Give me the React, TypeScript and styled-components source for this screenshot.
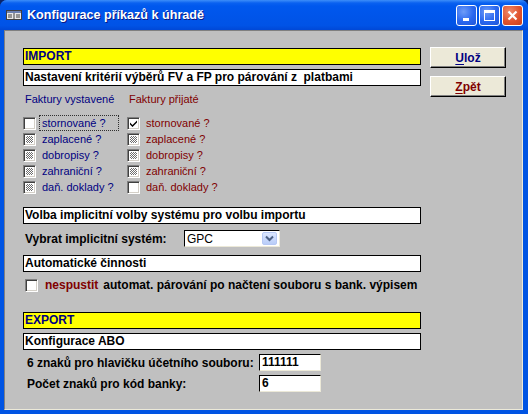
import React from "react";
import styled, { createGlobalStyle } from "styled-components";

const GlobalStyle = createGlobalStyle`
  html, body {
    margin: 0;
    padding: 0;
    background: #0a246a;
  }
  body {
    font-family: "Liberation Sans", Arial, sans-serif;
  }
`;

const BOLD = `bold 12px "Liberation Sans", Arial, sans-serif`;

const Window = styled.div`
  width: 528px;
  height: 414px;
  display: flex;
  flex-direction: column;
  box-sizing: border-box;
  border-radius: 7px 7px 0 0;
  overflow: hidden;
  background: #0054e3;
`;

const TitleBar = styled.div`
  height: 30px;
  flex: none;
  display: flex;
  align-items: center;
  padding: 0 5px 0 6px;
  box-sizing: border-box;
  background: linear-gradient(
    to bottom,
    #3d8ef9 0px,
    #0a61f0 3px,
    #0058ee 6px,
    #0055ea 50%,
    #0053e6 85%,
    #0048d6 100%
  );
`;

const TitleText = styled.span`
  margin-left: 5px;
  color: #fff;
  font: bold 12.6px "Liberation Sans", Arial, sans-serif;
  text-shadow: 1px 1px #0a1883;
  flex: 1;
`;

const CaptionButtons = styled.div`
  display: flex;
  gap: 2px;
  margin-top: 1px;
`;

const CaptionButton = styled.div<{ $close?: boolean }>`
  width: 21px;
  height: 21px;
  box-sizing: border-box;
  border: 1px solid #fff;
  border-radius: 3px;
  display: flex;
  align-items: center;
  justify-content: center;
  background: ${(p) =>
    p.$close
      ? "radial-gradient(circle at 35% 30%, #f08a6b 0%, #e0532e 55%, #c8401c 100%)"
      : "radial-gradient(circle at 35% 30%, #6e9cf8 0%, #2a67ef 55%, #1f56d8 100%)"};
`;

const Frame = styled.div`
  flex: 1;
  display: flex;
  border-left: 4px solid #0054e3;
  border-right: 5px solid #0054e3;
  border-bottom: 4px solid #0054e3;
`;

const Client = styled.div`
  flex: 1;
  display: flex;
  gap: 9px;
  align-items: flex-start;
  padding: 16px 0 0 18px;
  background: #c0c0c0;
  border-top: 1px solid #808080;
  border-left: 1px solid #808080;
  border-right: 1px solid #ece9d8;
  border-bottom: 1px solid #ece9d8;
`;

const LeftColumn = styled.div`
  width: 398px;
  padding-top: 1px;
  display: flex;
  flex-direction: column;
`;

const RightColumn = styled.div`
  display: flex;
  flex-direction: column;
  gap: 8px;
`;

const Banner = styled.div<{ $bg: string; $color: string; $mt?: number }>`
  height: 17px;
  box-sizing: border-box;
  margin-top: ${(p) => p.$mt ?? 0}px;
  border: 1px solid #000;
  background: ${(p) => p.$bg};
  color: ${(p) => p.$color};
  font: ${BOLD};
  line-height: 15px;
  padding-left: 1px;
  white-space: pre;
`;

const Grid = styled.div<{ $mt?: number }>`
  display: grid;
  grid-template-columns: 104px 1fr;
  margin-top: ${(p) => p.$mt ?? 0}px;
`;

const ColumnHead = styled.div<{ $color: string }>`
  height: 14px;
  line-height: 14px;
  padding-left: 2px;
  font-size: 11px;
  color: ${(p) => p.$color};
`;

const CheckRow = styled.div`
  height: 16px;
  display: flex;
  align-items: flex-start;
  gap: 6px;
`;

const Label = styled.span<{ $color: string; $focused?: boolean }>`
  display: inline-block;
  height: 14px;
  line-height: 14px;
  font-size: 11px;
  color: ${(p) => p.$color};
  white-space: nowrap;
  ${(p) =>
    p.$focused
      ? `outline: 1px dotted #303030; outline-offset: 0px; width: 76px; padding-left: 2px; margin-left: -2px;`
      : ""}
`;

const Box = styled.span`
  flex: none;
  width: 13px;
  height: 13px;
  margin-top: 1px;
  box-sizing: border-box;
  border: 1px solid;
  border-color: #808080 #fff #fff #808080;
  box-shadow: inset 1px 1px #404040, inset -1px -1px #d4d0c8;
  background: #fff;
  display: flex;
  align-items: center;
  justify-content: center;
`;

const Checker = styled.span`
  width: 7px;
  height: 7px;
  background: repeating-conic-gradient(#6e6e6e 0 25%, #ffffff 0 50%) 0 0 / 2px 2px;
`;

type CheckState = "empty" | "checked" | "mixed";

function CheckBox({ state }: { state: CheckState }) {
  return (
    <Box>
      {state === "mixed" && <Checker />}
      {state === "checked" && (
        <svg width="9" height="9" viewBox="0 0 9 9">
          <path d="M1 3.5 L3.5 6 L8 1.5 L8 3.5 L3.5 8 L1 5.5 Z" fill="#000" />
        </svg>
      )}
    </Box>
  );
}

const FieldRow = styled.div<{ $mt?: number }>`
  display: flex;
  align-items: center;
  height: 17px;
  margin-top: ${(p) => p.$mt ?? 0}px;
`;

const FieldLabel = styled.span<{ $width: number; $pad?: number }>`
  width: ${(p) => p.$width}px;
  padding-left: ${(p) => p.$pad ?? 2}px;
  box-sizing: border-box;
  font: ${BOLD};
  color: #000;
  white-space: nowrap;
`;

const Combo = styled.div`
  width: 96px;
  height: 17px;
  box-sizing: border-box;
  border: 1px solid;
  border-color: #000 #ece9d8 #ece9d8 #000;
  background: #fff;
  display: flex;
  align-items: center;
  justify-content: space-between;
  padding: 0 2px 0 2px;
  font-size: 12px;
  color: #000;
`;

const ComboButton = styled.span`
  width: 15px;
  height: 13px;
  border-radius: 2px;
  background: linear-gradient(to bottom, #dbe6fd, #b9cdf9);
  border: 1px solid #b6c8f4;
  box-sizing: border-box;
  display: flex;
  align-items: center;
  justify-content: center;
`;

const TextInput = styled.div`
  width: 62px;
  height: 17px;
  box-sizing: border-box;
  border: 1px solid;
  border-color: #000 #ece9d8 #ece9d8 #000;
  background: #fff;
  padding-left: 2px;
  font: ${BOLD};
  line-height: 15px;
  color: #000;
`;

const AutoRow = styled.div<{ $mt?: number }>`
  display: flex;
  align-items: flex-start;
  height: 14px;
  margin-top: ${(p) => p.$mt ?? 0}px;
  padding-left: 2px;
  font: ${BOLD};
  line-height: 14px;
`;

const Strong = styled.span<{ $color: string; $ml: number }>`
  color: ${(p) => p.$color};
  margin-left: ${(p) => p.$ml}px;
  white-space: pre;
`;

const PushButton = styled.button<{ $color: string }>`
  width: 76px;
  height: 21px;
  box-sizing: border-box;
  padding: 0;
  background: #ece9d8;
  border: 1px solid;
  border-color: #fff #000 #000 #fff;
  box-shadow: inset -1px -1px #808080;
  font: ${BOLD};
  color: ${(p) => p.$color};
  cursor: default;
  u {
    text-underline-offset: 2px;
  }
`;

const FormIcon = () => (
  <svg width="16" height="10" viewBox="0 0 16 10">
    <rect x="0.5" y="0.5" width="15" height="9" fill="#e8e8e8" stroke="#404040" />
    <rect x="1" y="1" width="14" height="2" fill="#6a7fb0" />
    <line x1="8" y1="3" x2="8" y2="9" stroke="#404040" />
    <line x1="2" y1="5" x2="6" y2="5" stroke="#404040" />
    <line x1="2" y1="7" x2="6" y2="7" stroke="#404040" />
    <line x1="10" y1="5" x2="14" y2="5" stroke="#404040" />
    <line x1="10" y1="7" x2="14" y2="7" stroke="#404040" />
  </svg>
);

const NAVY = "#000080";
const MAROON = "#800000";

const rows: { left: string; right: string; ls: CheckState; rs: CheckState }[] = [
  { left: "stornované ?", right: "stornované ?", ls: "empty", rs: "checked" },
  { left: "zaplacené ?", right: "zaplacené ?", ls: "mixed", rs: "mixed" },
  { left: "dobropisy ?", right: "dobropisy ?", ls: "mixed", rs: "mixed" },
  { left: "zahraniční ?", right: "zahraniční ?", ls: "mixed", rs: "mixed" },
  { left: "daň. doklady ?", right: "daň. doklady ?", ls: "mixed", rs: "empty" },
];

export default function App() {
  return (
    <>
      <GlobalStyle />
      <Window>
        <TitleBar>
          <FormIcon />
          <TitleText>Konfigurace příkazů k úhradě</TitleText>
          <CaptionButtons>
            <CaptionButton>
              <svg width="13" height="13" viewBox="0 0 13 13">
                <rect x="3" y="9" width="6" height="3" fill="#fff" />
              </svg>
            </CaptionButton>
            <CaptionButton>
              <svg width="13" height="13" viewBox="0 0 13 13">
                <rect x="1.5" y="1.5" width="10" height="10" fill="none" stroke="#fff" />
                <rect x="1" y="1" width="11" height="3" fill="#fff" />
              </svg>
            </CaptionButton>
            <CaptionButton $close>
              <svg width="13" height="13" viewBox="0 0 13 13">
                <path d="M2.5 2.5 L10.5 10.5 M10.5 2.5 L2.5 10.5" stroke="#fff" strokeWidth="2.2" />
              </svg>
            </CaptionButton>
          </CaptionButtons>
        </TitleBar>
        <Frame>
          <Client>
            <LeftColumn>
              <Banner $bg="#ffff00" $color={NAVY}>IMPORT</Banner>
              <Banner $bg="#fff" $color="#000" $mt={4}>
                Nastavení kritérií výběrů FV a FP pro párování z  platbami
              </Banner>
              <Grid $mt={6}>
                <ColumnHead $color={NAVY}>Faktury vystavené</ColumnHead>
                <ColumnHead $color={MAROON}>Faktury přijaté</ColumnHead>
              </Grid>
              <Grid $mt={10}>
                {rows.map((r, i) => (
                  <React.Fragment key={i}>
                    <CheckRow>
                      <CheckBox state={r.ls} />
                      <Label $color={NAVY} $focused={i === 0}>
                        {r.left}
                      </Label>
                    </CheckRow>
                    <CheckRow>
                      <CheckBox state={r.rs} />
                      <Label $color={MAROON}>{r.right}</Label>
                    </CheckRow>
                  </React.Fragment>
                ))}
              </Grid>
              <Banner $bg="#fff" $color="#000" $mt={11}>
                Volba implicitní volby systému pro volbu importu
              </Banner>
              <FieldRow $mt={6}>
                <FieldLabel $width={161}>Vybrat implicitní systém:</FieldLabel>
                <Combo>
                  <span>GPC</span>
                  <ComboButton>
                    <svg width="9" height="7" viewBox="0 0 9 7">
                      <path d="M1 1.5 L4.5 5 L8 1.5" fill="none" stroke="#4d6185" strokeWidth="2" />
                    </svg>
                  </ComboButton>
                </Combo>
              </FieldRow>
              <Banner $bg="#fff" $color="#000" $mt={8}>Automatické činnosti</Banner>
              <AutoRow $mt={6}>
                <CheckBox state="empty" />
                <Strong $color={MAROON} $ml={7}>nespustit</Strong>
                <Strong $color="#000" $ml={5}>automat. párování po načtení souboru s bank. výpisem</Strong>
              </AutoRow>
              <Banner $bg="#ffff00" $color={NAVY} $mt={20}>EXPORT</Banner>
              <Banner $bg="#fff" $color="#000" $mt={4}>Konfigurace ABO</Banner>
              <FieldRow $mt={4}>
                <FieldLabel $width={236} $pad={4}>6 znaků pro hlavičku účetního souboru:</FieldLabel>
                <TextInput>111111</TextInput>
              </FieldRow>
              <FieldRow $mt={4}>
                <FieldLabel $width={236} $pad={4}>Počet znaků pro kód banky:</FieldLabel>
                <TextInput>6</TextInput>
              </FieldRow>
            </LeftColumn>
            <RightColumn>
              <PushButton $color={NAVY}>
                <u>U</u>lož
              </PushButton>
              <PushButton $color={MAROON}>
                <u>Z</u>pět
              </PushButton>
            </RightColumn>
          </Client>
        </Frame>
      </Window>
    </>
  );
}
